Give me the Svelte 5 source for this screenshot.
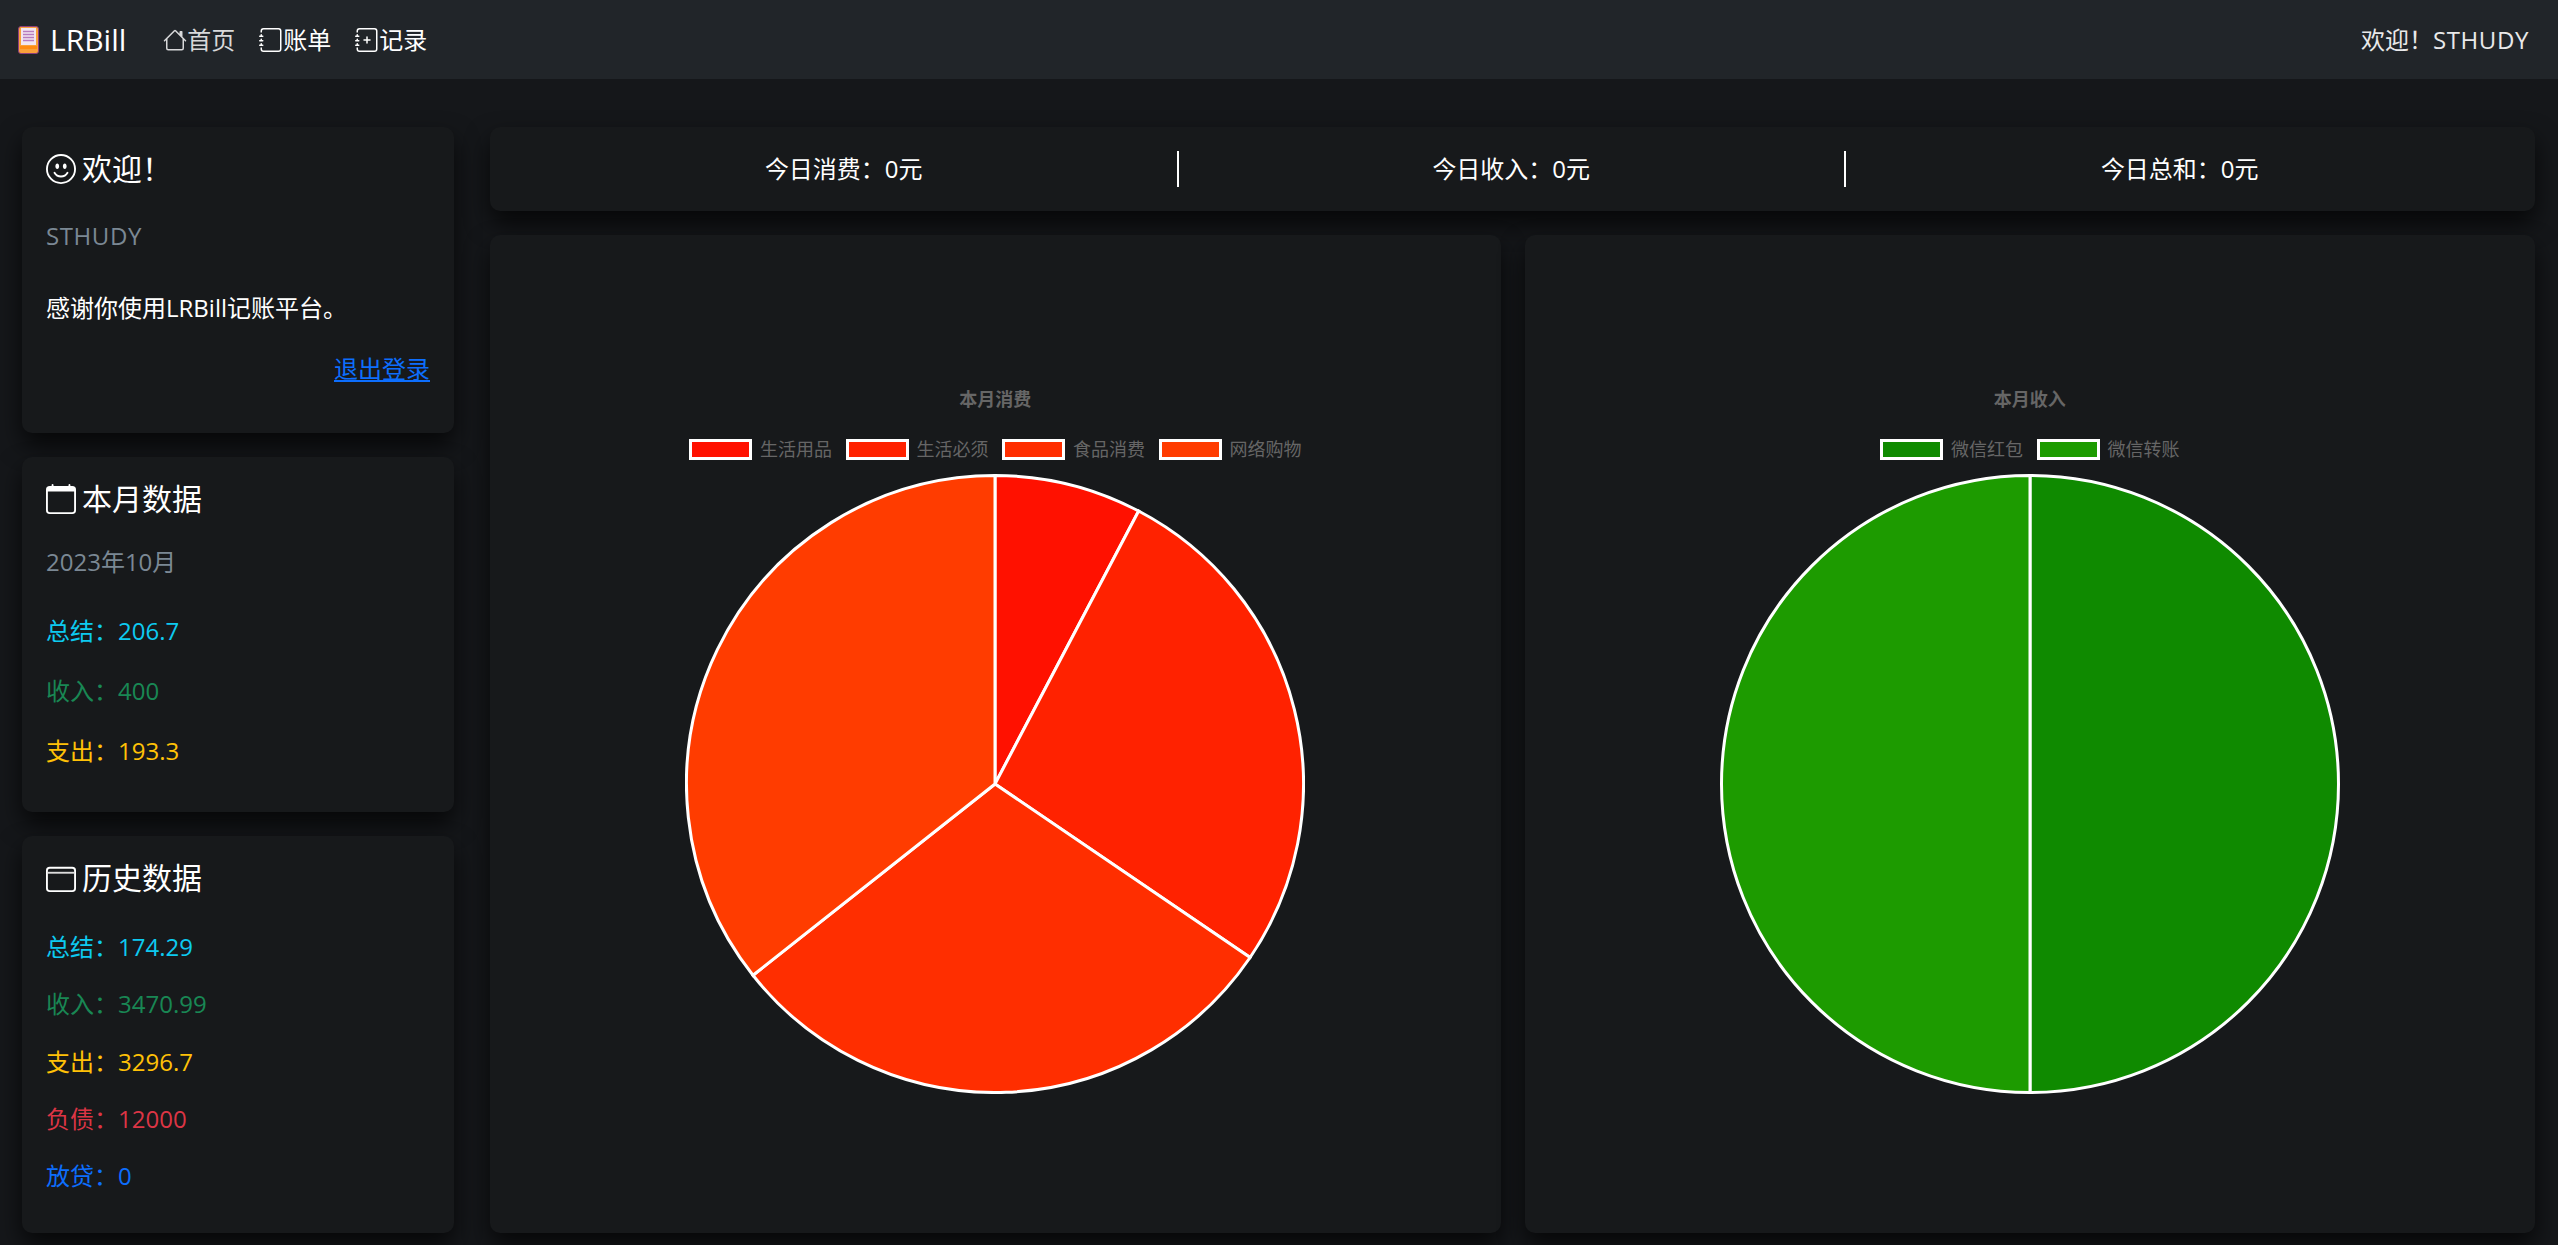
<script>
  const monthRows = [
    { label: '总结：', value: '206.7', cls: 'info' },
    { label: '收入：', value: '400', cls: 'success' },
    { label: '支出：', value: '193.3', cls: 'warning' }
  ];
  const historyRows = [
    { label: '总结：', value: '174.29', cls: 'info' },
    { label: '收入：', value: '3470.99', cls: 'success' },
    { label: '支出：', value: '3296.7', cls: 'warning' },
    { label: '负债：', value: '12000', cls: 'danger' },
    { label: '放贷：', value: '0', cls: 'primary' }
  ];
  const today = ['今日消费：0元', '今日收入：0元', '今日总和：0元'];

  const charts = [
    {
      title: '本月消费',
      items: [
        { name: '生活用品', value: 14.9, color: '#ff1100' },
        { name: '生活必须', value: 51.8, color: '#ff2200' },
        { name: '食品消费', value: 57.7, color: '#ff2e00' },
        { name: '网络购物', value: 68.9, color: '#ff3c00' }
      ]
    },
    {
      title: '本月收入',
      items: [
        { name: '微信红包', value: 200, color: '#0f8a00' },
        { name: '微信转账', value: 200, color: '#1d9b00' }
      ]
    }
  ];

  // pie slices, starting at 12 o'clock like chart.js
  function slices(items) {
    const total = items.reduce((s, i) => s + i.value, 0);
    const c = 310;
    const r = 308.5;
    let a = -Math.PI / 2;
    return items.map((i) => {
      const next = a + (i.value / total) * Math.PI * 2;
      const large = next - a > Math.PI ? 1 : 0;
      const d = `M${c} ${c}L${c + r * Math.cos(a)} ${c + r * Math.sin(a)}A${r} ${r} 0 ${large} 1 ${c + r * Math.cos(next)} ${c + r * Math.sin(next)}Z`;
      a = next;
      return { d, color: i.color };
    });
  }
</script>

<nav class="navbar">
  <a class="brand" href="#top">
    <svg class="logo" viewBox="0 0 21 28">
      <rect x="0.5" y="0.5" width="20" height="27" rx="2.5" fill="#f9a13a" stroke="#8e3f7c" />
      <rect x="2" y="20" width="17" height="3" fill="#ff8c12" />
      <rect x="3" y="2" width="15" height="17" fill="#f1e6f2" />
      <path d="M5 5.5h11M5 8.5h11M5 11.5h11M5 14.5h11" stroke="#b77cc0" stroke-width="1.4" />
    </svg>
    LRBill
  </a>
  <a class="nav-link dim" href="#top">
    <svg class="bi" viewBox="0 0 16 16" fill="currentColor"><path d="M8.707 1.5a1 1 0 0 0-1.414 0L.646 8.146a.5.5 0 0 0 .708.708L2 8.207V13.5A1.5 1.5 0 0 0 3.5 15h9a1.5 1.5 0 0 0 1.5-1.5V8.207l.646.647a.5.5 0 0 0 .708-.708L13 5.793V2.5a.5.5 0 0 0-.5-.5h-1a.5.5 0 0 0-.5.5v1.293L8.707 1.5ZM13 7.207V13.5a.5.5 0 0 1-.5.5h-9a.5.5 0 0 1-.5-.5V7.207l5-5 5 5Z" /></svg>首页
  </a>
  <a class="nav-link" href="#top">
    <svg class="bi" viewBox="0 0 16 16" fill="currentColor"><path d="M3 0h10a2 2 0 0 1 2 2v12a2 2 0 0 1-2 2H3a2 2 0 0 1-2-2v-1h1v1a1 1 0 0 0 1 1h10a1 1 0 0 0 1-1V2a1 1 0 0 0-1-1H3a1 1 0 0 0-1 1v1H1V2a2 2 0 0 1 2-2z" /><path d="M1 5v-.5a.5.5 0 0 1 1 0V5h.5a.5.5 0 0 1 0 1h-2a.5.5 0 0 1 0-1H1zm0 3v-.5a.5.5 0 0 1 1 0V8h.5a.5.5 0 0 1 0 1h-2a.5.5 0 0 1 0-1H1zm0 3v-.5a.5.5 0 0 1 1 0v.5h.5a.5.5 0 0 1 0 1h-2a.5.5 0 0 1 0-1H1z" /></svg>账单
  </a>
  <a class="nav-link" href="#top">
    <svg class="bi" viewBox="0 0 16 16" fill="currentColor"><path d="M8 5.5a.5.5 0 0 1 .5.5v1.5H10a.5.5 0 0 1 0 1H8.5V10a.5.5 0 0 1-1 0V8.5H6a.5.5 0 0 1 0-1h1.5V6a.5.5 0 0 1 .5-.5z" /><path d="M3 0h10a2 2 0 0 1 2 2v12a2 2 0 0 1-2 2H3a2 2 0 0 1-2-2v-1h1v1a1 1 0 0 0 1 1h10a1 1 0 0 0 1-1V2a1 1 0 0 0-1-1H3a1 1 0 0 0-1 1v1H1V2a2 2 0 0 1 2-2z" /><path d="M1 5v-.5a.5.5 0 0 1 1 0V5h.5a.5.5 0 0 1 0 1h-2a.5.5 0 0 1 0-1H1zm0 3v-.5a.5.5 0 0 1 1 0V8h.5a.5.5 0 0 1 0 1h-2a.5.5 0 0 1 0-1H1zm0 3v-.5a.5.5 0 0 1 1 0v.5h.5a.5.5 0 0 1 0 1h-2a.5.5 0 0 1 0-1H1z" /></svg>记录
  </a>
  <span class="nav-user">欢迎！<span class="caps">STHUDY</span></span>
</nav>

<div class="page">
  <aside class="sidebar">
    <section class="card welcome">
      <h5>
        <svg class="bi-lg" viewBox="0 0 16 16" fill="currentColor"><path d="M8 15A7 7 0 1 1 8 1a7 7 0 0 1 0 14zm0 1A8 8 0 1 0 8 0a8 8 0 0 0 0 16z" /><path d="M4.285 9.567a.5.5 0 0 1 .683.183A3.498 3.498 0 0 0 8 11.5a3.498 3.498 0 0 0 3.032-1.75.5.5 0 1 1 .866.5A4.498 4.498 0 0 1 8 12.5a4.498 4.498 0 0 1-3.898-2.25.5.5 0 0 1 .183-.683zM7 6.5C7 7.328 6.552 8 6 8s-1-.672-1-1.5S5.448 5 6 5s1 .672 1 1.5zm4 0c0 .828-.448 1.5-1 1.5s-1-.672-1-1.5S9.448 5 10 5s1 .672 1 1.5z" /></svg>
        欢迎！
      </h5>
      <p class="muted"><span class="caps">STHUDY</span></p>
      <p class="thanks">感谢你使用LRBill记账平台。</p>
      <p class="logout"><a href="#top">退出登录</a></p>
    </section>

    <section class="card month">
      <h5>
        <svg class="bi-lg" viewBox="0 0 16 16" fill="currentColor"><path d="M3.5 0a.5.5 0 0 1 .5.5V1h8V.5a.5.5 0 0 1 1 0V1h1a2 2 0 0 1 2 2v11a2 2 0 0 1-2 2H2a2 2 0 0 1-2-2V3a2 2 0 0 1 2-2h1V.5a.5.5 0 0 1 .5-.5zM1 4v10a1 1 0 0 0 1 1h12a1 1 0 0 0 1-1V4H1z" /></svg>
        本月数据
      </h5>
      <p class="muted">2023年10月</p>
      <div class="rows">
        {#each monthRows as row}
          <p class={row.cls}>{row.label}{row.value}</p>
        {/each}
      </div>
    </section>

    <section class="card history">
      <h5>
        <svg class="bi-lg" viewBox="0 0 16 16" fill="none" stroke="currentColor"><rect x="0.5" y="2.5" width="15" height="12.5" rx="1.5" /><path d="M1 5.2h14" stroke="#dcdcdc" /></svg>
        历史数据
      </h5>
      <div class="rows">
        {#each historyRows as row}
          <p class={row.cls}>{row.label}{row.value}</p>
        {/each}
      </div>
    </section>
  </aside>

  <main class="content">
    <section class="card today">
      {#each today as item}
        <div class="today-item">{item}</div>
      {/each}
    </section>

    <div class="charts">
      {#each charts as chart}
        <section class="card chart">
          <div class="chart-title">{chart.title}</div>
          <div class="legend">
            {#each chart.items as item}
              <span class="legend-item">
                <i class="swatch" style="background:{item.color}"></i>{item.name}
              </span>
            {/each}
          </div>
          <svg class="pie" viewBox="0 0 620 620">
            {#each slices(chart.items) as s}
              <path d={s.d} fill={s.color} stroke="#fff" stroke-width="3" />
            {/each}
          </svg>
        </section>
      {/each}
    </div>
  </main>
</div>

<style>
  :global(body) {
    margin: 0;
    background: #15171a;
    color: #fff;
    font-family: 'Open Sans', 'Noto Sans CJK SC', sans-serif;
    font-size: 24px;
    line-height: 36px;
  }

  .navbar {
    display: flex;
    align-items: center;
    height: 79px;
    padding: 0 29px 0 18px;
    background: #212529;
    box-sizing: border-box;
  }

  .brand {
    display: flex;
    align-items: center;
    gap: 11px;
    margin-right: 25px;
    font-size: 30px;
    color: #fff;
    text-decoration: none;
  }

  .logo {
    width: 21px;
    height: 28px;
  }

  .nav-link {
    display: flex;
    align-items: center;
    padding: 0 12px;
    color: #fff;
    text-decoration: none;
  }

  .nav-link.dim {
    color: #d8d9da;
  }

  .bi {
    width: 24px;
    height: 24px;
  }

  .nav-user {
    margin-left: auto;
    color: #e9e9ea;
  }

  .caps {
    letter-spacing: 0.6px;
  }

  .page {
    display: grid;
    grid-template-columns: 432px 1fr;
    gap: 36px;
    padding: 48px 23px 12px 22px;
  }

  .sidebar {
    display: flex;
    flex-direction: column;
    gap: 24px;
  }

  .card {
    background: #17191b;
    border-radius: 10px;
    box-shadow: 0 12px 24px rgba(0, 0, 0, 0.7);
  }

  .sidebar .card {
    padding: 24px;
  }

  h5 {
    display: flex;
    align-items: center;
    gap: 6px;
    margin: 0;
    font-size: 30px;
    font-weight: 400;
    line-height: 36px;
  }

  .bi-lg {
    width: 30px;
    height: 30px;
  }

  p {
    margin: 0;
  }

  .muted {
    color: #7b8894;
  }

  .welcome {
    padding-bottom: 46px !important;
  }

  .welcome .muted {
    margin-top: 31px;
  }

  .thanks {
    margin-top: 36px;
  }

  .logout {
    margin-top: 25px;
    text-align: right;
  }

  .logout a {
    color: #0d6efd;
  }

  .month {
    padding-bottom: 43px !important;
  }

  .month .muted {
    margin-top: 27px;
  }

  .month .rows {
    margin-top: 33px;
    gap: 24px;
  }

  .history {
    padding-bottom: 39px !important;
  }

  .history .rows {
    margin-top: 33px;
    gap: 21.3px;
  }

  .rows {
    display: flex;
    flex-direction: column;
  }

  .info {
    color: #0dcaf0;
  }

  .success {
    color: #198754;
  }

  .warning {
    color: #ffc107;
  }

  .danger {
    color: #dc3545;
  }

  .primary {
    color: #0d6efd;
  }

  .content {
    display: flex;
    flex-direction: column;
    gap: 24px;
  }

  .today {
    display: grid;
    grid-template-columns: repeat(3, 667.5px);
    padding: 24px 21px;
  }

  .today-item {
    text-align: center;
    border-right: 2px solid #fff;
  }

  .today-item:last-child {
    border-right: none;
  }

  .charts {
    flex: 1;
    display: grid;
    grid-template-columns: 1fr 1fr;
    gap: 24px;
  }

  .chart {
    display: flex;
    flex-direction: column;
    align-items: center;
    padding-top: 151.5px;
    color: #666;
    font-size: 18px;
    line-height: 24px;
  }

  .chart-title {
    font-weight: 700;
  }

  .legend {
    display: flex;
    gap: 13.5px;
    margin-top: 26px;
    height: 25px;
  }

  .legend-item {
    display: flex;
    align-items: center;
    gap: 8px;
  }

  .swatch {
    display: block;
    width: 57px;
    height: 15px;
    border: 3px solid #fff;
  }

  .pie {
    width: 620px;
    height: 620px;
    margin-top: 12.5px;
  }
</style>
